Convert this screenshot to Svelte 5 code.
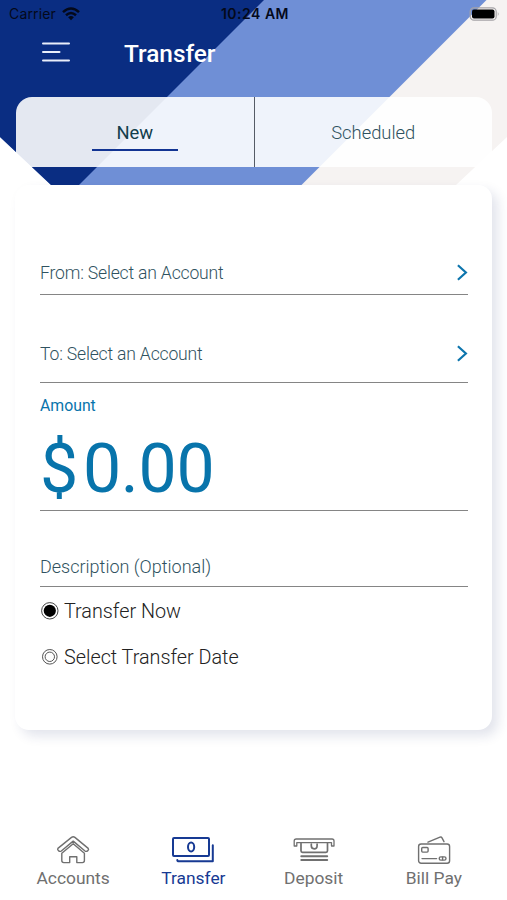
<script lang="ts">
	let tab = $state('new');
	let when = $state('now');
	let active = $state('transfer');

	const tabs = [
		{ id: 'new', label: 'New' },
		{ id: 'scheduled', label: 'Scheduled' }
	];
	const accounts = [
		{ id: 'from', label: 'From: Select an Account' },
		{ id: 'to', label: 'To: Select an Account' }
	];
	const options = [
		{ id: 'now', label: 'Transfer Now' },
		{ id: 'date', label: 'Select Transfer Date' }
	];
	const nav = [
		{ id: 'accounts', label: 'Accounts' },
		{ id: 'transfer', label: 'Transfer' },
		{ id: 'deposit', label: 'Deposit' },
		{ id: 'billpay', label: 'Bill Pay' }
	];
</script>

<div class="screen">
	<svg class="backdrop" width="507" height="185" viewBox="0 0 507 185" aria-hidden="true">
		<path d="M0 0H507V137L456 185H51L0 137Z" fill="#f6f3f2" />
		<path d="M0 0H486.5L301.5 185H51L0 137Z" fill="#6f8fd6" />
		<path d="M0 0H264L79 185H51L0 137Z" fill="#0a2d82" />
	</svg>

	<div class="status">
		<div class="carrier">
			<span>Carrier</span>
			<svg width="18" height="14" viewBox="0 0 18 14">
				<g fill="none" stroke="#04091a" stroke-width="2.5">
					<path d="M1 5.1Q9 -2.2 17 5.1" />
					<path d="M4 8.3Q9 3.8 14 8.3" />
				</g>
				<path d="M6.1 10.3Q9 7.9 11.9 10.3L9 13.3Z" fill="#04091a" />
			</svg>
		</div>
		<span class="time">10:24 AM</span>
		<svg class="battery" width="32" height="14" viewBox="0 0 32 14">
			<rect x="1.2" y="0.8" width="26" height="12.4" rx="3.8" fill="none" stroke="#a5a3a6" stroke-width="1.2" />
			<rect x="3" y="2.5" width="22.5" height="9" rx="2" fill="#000" />
			<path d="M28.8 4.8Q30.6 7 28.8 9.2Z" fill="#a5a3a6" />
		</svg>
	</div>

	<header>
		<button class="menu" aria-label="Menu">
			<svg width="28" height="22" viewBox="0 0 28 22">
				<path d="M1 2.4H27M1 11.1H17.5M1 19.5H27" stroke="#e9eefa" stroke-width="2" stroke-linecap="round" />
			</svg>
		</button>
		<h1>Transfer</h1>
	</header>

	<div class="tabs">
		{#each tabs as t}
			<button class:selected={tab === t.id} onclick={() => (tab = t.id)}>
				<span>{t.label}</span>
			</button>
		{/each}
	</div>

	<main>
		{#each accounts as account}
			<button class="account {account.id}">
				<span>{account.label}</span>
				<svg width="12" height="17" viewBox="0 0 12 17">
					<path d="M1.9 1.3L9.9 8.5L1.9 15.7" fill="none" stroke="#0d75ad" stroke-width="2.2" />
				</svg>
			</button>
		{/each}

		<div class="amount">
			<span class="caption">Amount</span>
			<div class="value"><span class="currency">$</span><span>0.00</span></div>
		</div>

		<div class="description">Description (Optional)</div>

		<div class="options">
			{#each options as option}
				<button class="option" onclick={() => (when = option.id)}>
					<svg width="20" height="20" viewBox="0 0 20 20">
						{#if when === option.id}
							<circle cx="9.8" cy="9.8" r="8.2" fill="none" stroke="#444" stroke-width="1" />
							<circle cx="9.8" cy="9.8" r="6.1" fill="#000" />
						{:else}
							<circle cx="9.8" cy="9.8" r="7.3" fill="none" stroke="#555" stroke-width="1" />
							<circle cx="9.8" cy="9.8" r="4.7" fill="none" stroke="#555" stroke-width="1" />
						{/if}
					</svg>
					<span>{option.label}</span>
				</button>
			{/each}
		</div>
	</main>

	<nav>
		{#each nav as item}
			<button class:active={active === item.id} onclick={() => (active = item.id)}>
				<svg width="44" height="30" viewBox="0 0 44 30" fill="none" stroke="currentColor" stroke-width="1.4" stroke-linejoin="round" stroke-linecap="round">
					{#if item.id === 'accounts'}
						<path d="M6.9 13.4L20.5 2.4Q22.2 1.1 23.9 2.4L37.2 13.4Q38 14.4 37 15.4Q35.4 17 34 16L22.2 6.1L10.3 16Q8.8 17 7.3 15.4Q6.2 14.4 6.9 13.4Z" />
						<path d="M10.8 18.2V25.6Q10.8 27.6 12.8 27.6H18.7V21.8H25.8V27.6H31.4Q33.4 27.6 33.4 25.6V18.2L22.2 8.8Z" />
					{:else if item.id === 'transfer'}
						<g stroke-width="2">
							<rect x="2" y="3" width="36" height="18" rx="1" />
							<ellipse cx="20.1" cy="12" rx="3.1" ry="4.4" />
							<path d="M41.8 10.3V26.3H8Q6.3 26.3 6.3 25" />
						</g>
					{:else if item.id === 'deposit'}
						<g stroke-width="1.7">
							<path d="M4.6 11H2.2V6Q2.2 4 4.2 4H40Q42 4 42 6V11H39.5V7.6H4.8V11Z" stroke-width="1.3" />
							<path d="M9 8.3V15.8Q9 17.3 10.5 17.3H34Q35.5 17.3 35.5 15.8V8.3" />
							<path d="M19.3 9V10.8Q19.3 13.8 22.2 13.8T25.1 10.8V9" />
							<path d="M9.3 21.2H35.2M9.3 25H35.2" stroke-width="2" />
						</g>
					{:else}
						<path d="M16 7.2L28 2.2Q29.3 1.7 30 2.9L32 6.7" />
						<rect x="6.6" y="9" width="31" height="19.2" rx="2.5" />
						<rect x="9.7" y="12.5" width="6.4" height="4.6" rx="1" />
						<path d="M10 23.6H24.6" />
						<rect x="27.2" y="21.9" width="6.8" height="3.2" rx="1.6" />
						<path d="M30.6 22.2V24.8" />
					{/if}
				</svg>
				<span>{item.label}</span>
			</button>
		{/each}
	</nav>
</div>

<style>
	:global(body) {
		background: #fff;
	}
	.screen {
		position: relative;
		display: flex;
		flex-direction: column;
		width: 507px;
		height: 900px;
		overflow: hidden;
		font-family: Roboto, 'Liberation Sans', sans-serif;
		background: #fff;
		isolation: isolate;
	}
	.backdrop {
		position: absolute;
		top: 0;
		left: 0;
		z-index: -1;
	}
	button {
		padding: 0;
		border: none;
		background: none;
		font: inherit;
		letter-spacing: inherit;
		color: inherit;
		cursor: pointer;
	}
	svg {
		display: block;
	}
	.status {
		display: grid;
		grid-template-columns: 1fr auto 1fr;
		align-items: center;
		height: 27px;
		padding: 0 6px 0 9px;
		font-family: Inter, sans-serif;
		font-size: 14px;
		color: #04091a;
	}
	.carrier {
		display: flex;
		align-items: center;
		gap: 6px;
		letter-spacing: 0.15px;
	}
	.time {
		font-weight: 600;
		letter-spacing: 0.5px;
	}
	.battery {
		justify-self: end;
	}
	header {
		display: flex;
		align-items: center;
		height: 50px;
		padding: 0 0 20px 42px;
	}
	h1 {
		margin: 2px 0 0 54px;
		color: #fff;
		font-size: 24.4px;
		font-weight: 500;
	}
	.tabs {
		display: flex;
		flex: none;
		height: 70px;
		margin: 0 15px 0 16px;
		border-radius: 16px 16px 0 0;
		background: rgba(255, 255, 255, 0.89);
		color: #2f5260;
		font-size: 18.4px;
		font-weight: 300;
	}
	.tabs button {
		display: flex;
		flex: 1;
		align-items: center;
		justify-content: center;
	}
	.tabs button + button {
		border-left: 1px solid #555b66;
	}
	.tabs span {
		width: 86px;
		padding: 9px 0 6px;
		border-bottom: 2px solid transparent;
	}
	.tabs .selected {
		color: #123e4c;
		font-weight: 400;
	}
	.tabs .selected span {
		border-color: #123493;
	}
	main {
		box-sizing: border-box;
		flex: none;
		height: 545px;
		margin: 18px 15px 0;
		padding: 58px 24px 0 25px;
		border-radius: 14px;
		background: #fff;
		box-shadow: 6px 6px 12px rgba(30, 50, 110, 0.13);
		color: #2f5260;
		font-size: 18px;
		font-weight: 300;
	}
	.account {
		box-sizing: border-box;
		display: flex;
		align-items: center;
		justify-content: space-between;
		width: 100%;
		height: 52px;
		padding-top: 8px;
		border-bottom: 1px solid #858585;
		font-size: 17.6px;
		letter-spacing: -0.19px;
	}
	.account.to {
		height: 88px;
		padding-top: 30px;
	}
	.amount {
		box-sizing: border-box;
		height: 128px;
		padding-top: 12px;
		border-bottom: 1px solid #858585;
		color: #0874ab;
		font-weight: 400;
	}
	.caption {
		display: block;
		font-size: 15.8px;
		line-height: 22px;
	}
	.value {
		display: flex;
		gap: 5px;
		padding-top: 12px;
		font-size: 68px;
		line-height: 80px;
		letter-spacing: -0.3px;
	}
	.description {
		box-sizing: border-box;
		height: 76px;
		padding-top: 45px;
		border-bottom: 1px solid #858585;
		line-height: 22px;
	}
	.options {
		display: flex;
		flex-direction: column;
		padding-top: 1px;
		color: #222;
		font-size: 19.8px;
	}
	.option {
		display: flex;
		align-items: center;
		gap: 4px;
		height: 46px;
	}
	nav {
		display: flex;
		margin-top: 105px;
		padding: 0 13px;
		color: #707070;
		font-size: 17.4px;
	}
	nav button {
		display: flex;
		flex: 1;
		flex-direction: column;
		align-items: center;
		gap: 3px;
	}
	nav .active {
		color: #173a93;
	}
</style>
